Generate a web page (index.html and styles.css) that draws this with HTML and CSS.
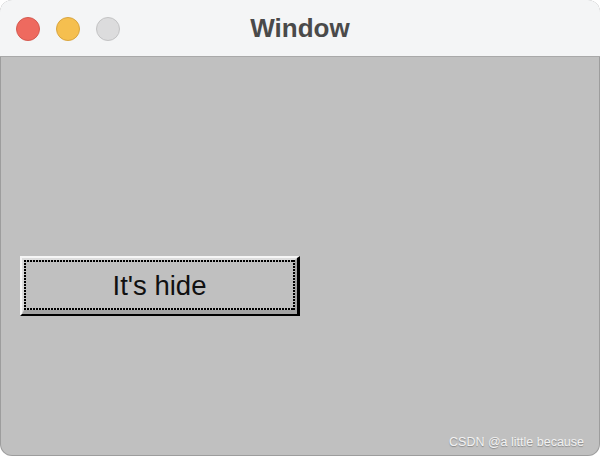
FILE: index.html
```html
<!DOCTYPE html>
<html lang="en">
<head>
    <meta charset="UTF-8" />
    <title>Window</title>
    <link rel="stylesheet" href="styles.css">
</head>
<body>
    <div class="window">
        <div class="titlebar">
            <div class="lights">
                <span class="light close"></span>
                <span class="light minimize"></span>
                <span class="light zoom"></span>
            </div>
            <div class="title">Window</div>
        </div>

        <div class="content">
            <div class="tk-button">
                <div class="bevel">
                    <div class="focus">It's hide</div>
                </div>
            </div>
        </div>

        <div class="watermark">CSDN @a little because</div>
    </div>
</body>
</html>
```

FILE: styles.css
```css
html, body {
    margin: 0;
    padding: 0;
    background: #ffffff;
}

.window {
    position: relative;
    width: 600px;
    height: 456px;
    box-sizing: border-box;
    border-radius: 12px;
    overflow: hidden;
    background: #c0c0c0;
    box-shadow: inset 0 0 0 1px rgba(0,0,0,0.18);
    display: flex;
    flex-direction: column;
}

.titlebar {
    position: relative;
    height: 56px;
    flex: none;
    background: #f4f5f6;
    border-bottom: 1px solid #a9a9a9;
    display: flex;
    align-items: center;
}

.lights {
    display: flex;
    gap: 16px;
    padding-left: 16px;
    padding-top: 1px;
}

.light {
    width: 24px;
    height: 24px;
    box-sizing: border-box;
    border-radius: 50%;
    border: 1px solid;
}

.light.close {
    background: #ee6a5f;
    border-color: #d55a50;
}

.light.minimize {
    background: #f5bf4f;
    border-color: #d9a53f;
}

.light.zoom {
    background: #dcdcdd;
    border-color: #c3c3c4;
}

.title {
    position: absolute;
    left: 0;
    right: 0;
    top: 0;
    line-height: 56px;
    text-align: center;
    font-family: "Liberation Sans", Arial, sans-serif;
    font-weight: bold;
    font-size: 26px;
    color: #4a4a4a;
}

.content {
    flex: 1;
    padding: 199px 0 0 20px;
}

/* classic raised Tk button with focus ring */
.tk-button {
    width: 280px;
    height: 60px;
    box-sizing: border-box;
    border-style: solid;
    border-width: 2px 3px 2px 2px;
    border-color: #f6f6f6 #000000 #000000 #f6f6f6;
}

.bevel {
    height: 100%;
    box-sizing: border-box;
    border-style: solid;
    border-width: 2px 2px 4px 2px;
    border-color: #dedede #a3a3a3 #a3a3a3 #dedede;
}

.focus {
    height: 100%;
    box-sizing: border-box;
    display: flex;
    align-items: center;
    justify-content: center;
    padding-top: 1px;
    font-family: "Liberation Sans", Arial, sans-serif;
    font-size: 27.5px;
    color: #111111;
    background:
        repeating-linear-gradient(90deg, #000 0 2px, transparent 2px 3px) top / 100% 2px no-repeat,
        repeating-linear-gradient(90deg, #000 0 2px, transparent 2px 3px) bottom / 100% 2px no-repeat,
        repeating-linear-gradient(180deg, #000 0 2px, transparent 2px 3px) left / 2px 100% no-repeat,
        repeating-linear-gradient(180deg, #000 0 2px, transparent 2px 3px) right / 2px 100% no-repeat;
}

.watermark {
    position: absolute;
    right: 16px;
    bottom: 7px;
    font-family: "Liberation Sans", Arial, sans-serif;
    font-size: 12.5px;
    color: #f2f2f2;
    text-shadow: 0 1px 1px #8a8a8a;
}
```
